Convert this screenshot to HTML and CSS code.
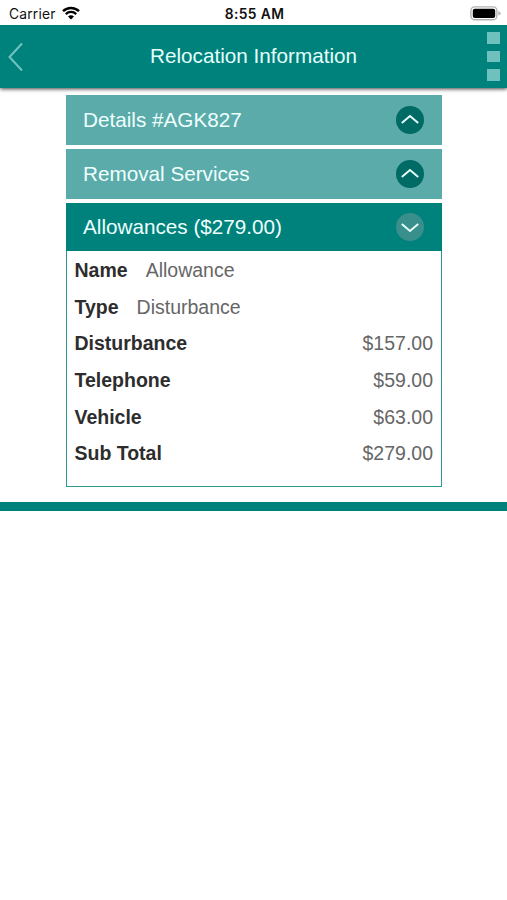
FILE: index.html
```html
<!DOCTYPE html>
<html lang="en">
<head>
    <meta charset="UTF-8">
    <meta name="viewport" content="width=device-width, initial-scale=1.0">
    <title>Relocation Information</title>
    <link rel="stylesheet" href="styles.css">
</head>
<body>

<!-- Status bar -->
<div class="status">
    <div class="carrier">
        <span>Carrier</span>
        <svg class="wifi" width="18" height="14" viewBox="0 0 18 14">
            <path d="M1 5.2 A11.5 11.5 0 0 1 17 5.2" fill="none" stroke="#000" stroke-width="2.5"/>
            <path d="M3.8 8.1 A7.4 7.4 0 0 1 14.2 8.1" fill="none" stroke="#000" stroke-width="2.3"/>
            <path d="M9 13.6 L6 10.6 A4.3 4.3 0 0 1 12 10.6 Z" fill="#000"/>
        </svg>
    </div>
    <div class="time">8:55 AM</div>
    <svg class="battery" width="31" height="15" viewBox="0 0 31 15">
        <rect x="0.9" y="0.9" width="26" height="12.8" rx="3.8" fill="#fff" stroke="#b2b2b2" stroke-width="1.4"/>
        <rect x="2.8" y="2.7" width="22.4" height="9.2" rx="2" fill="#000"/>
        <path d="M28.4 5 Q30.6 6 30.6 7.3 Q30.6 8.6 28.4 9.6 Z" fill="#b2b2b2"/>
    </svg>
</div>

<!-- Navigation -->
<div class="navbar">
    <svg class="back" width="16" height="30" viewBox="0 0 16 30">
        <path d="M14 1.5 L1.5 15 L14 28.5" fill="none" stroke="#72c3c0" stroke-width="2"/>
    </svg>
    <div class="title">Relocation Information</div>
    <div class="menu">
        <span></span>
        <span></span>
        <span></span>
    </div>
</div>

<div class="accordion">
    <div class="header">
        <span>Details #AGK827</span>
        <svg class="toggle" width="28" height="28" viewBox="0 0 28 28">
            <circle cx="14" cy="14" r="14"/>
            <path d="M5.8 17 L14 10 L22.2 17"/>
        </svg>
    </div>
    <div class="header">
        <span>Removal Services</span>
        <svg class="toggle" width="28" height="28" viewBox="0 0 28 28">
            <circle cx="14" cy="14" r="14"/>
            <path d="M5.8 17 L14 10 L22.2 17"/>
        </svg>
    </div>
    <div class="header active">
        <span>Allowances ($279.00)</span>
        <svg class="toggle" width="28" height="28" viewBox="0 0 28 28">
            <circle cx="14" cy="14" r="14"/>
            <path d="M5.8 11 L14 18 L22.2 11"/>
        </svg>
    </div>
    <div class="panel">
        <div class="row"><b>Name</b><span>Allowance</span></div>
        <div class="row"><b>Type</b><span>Disturbance</span></div>
        <div class="row amount"><b>Disturbance</b><span>$157.00</span></div>
        <div class="row amount"><b>Telephone</b><span>$59.00</span></div>
        <div class="row amount"><b>Vehicle</b><span>$63.00</span></div>
        <div class="row amount"><b>Sub Total</b><span>$279.00</span></div>
    </div>
</div>

<div class="footer"></div>

</body>
</html>
```
FILE: styles.css
```css
* {
    box-sizing: border-box;
}
body {
    margin: 0;
    background-color: #fff;
    font-family: "Liberation Sans", Arial, sans-serif;
}
.status {
    position: relative;
    z-index: 1;
    display: grid;
    grid-template-columns: 1fr auto 1fr;
    align-items: center;
    height: 25px;
    padding: 2px 6px 0 9px;
    background-color: #fff;
    color: #111;
    font-family: Inter, sans-serif;
    font-size: 13.8px;
}
.carrier {
    display: flex;
    align-items: center;
    gap: 6px;
    letter-spacing: 0.2px;
}
.wifi {
    margin-top: -2px;
}
.time {
    margin-right: 1px;
    font-weight: 600;
    letter-spacing: 0.4px;
}
.battery {
    justify-self: end;
    margin-top: -1px;
}
.navbar {
    display: flex;
    align-items: center;
    justify-content: space-between;
    height: 63px;
    padding: 0 7px 0 8px;
    background-color: #00827c;
    box-shadow: 0 1px 4px rgba(0, 0, 0, 0.75);
}
.title {
    margin-right: 4px;
    padding-bottom: 1px;
    color: #e4fffc;
    font-size: 20.7px;
}
.menu {
    display: flex;
    flex-direction: column;
    gap: 7px;
}
.menu span {
    width: 13px;
    height: 11.5px;
    background-color: #6fc1be;
}
.accordion {
    width: 376px;
    margin: 7px 0 0 66px;
}
.header {
    display: flex;
    align-items: center;
    justify-content: space-between;
    height: 49.8px;
    margin-bottom: 4px;
    padding: 0 18px 0 17px;
    background-color: #5aabaa;
    color: #effffe;
    font-size: 20.7px;
}
.header.active {
    height: 48.8px;
    margin-bottom: 0;
    background-color: #00827c;
}
.toggle circle {
    fill: #006a64;
}
.toggle path {
    fill: none;
    stroke: #e8fffd;
    stroke-width: 1.9;
}
.active .toggle circle {
    fill: #388f8b;
}
.panel {
    height: 235.6px;
    padding: 1px 8px 0 7.5px;
    border: 1px solid #2f9692;
    border-top: none;
}
.row {
    display: flex;
    align-items: center;
    gap: 18px;
    height: 36.6px;
    color: #666;
    font-size: 19.5px;
}
.row b {
    color: #2d2d2d;
}
.amount {
    justify-content: space-between;
}
.footer {
    height: 9px;
    margin-top: 15px;
    background-color: #00827c;
}
```
